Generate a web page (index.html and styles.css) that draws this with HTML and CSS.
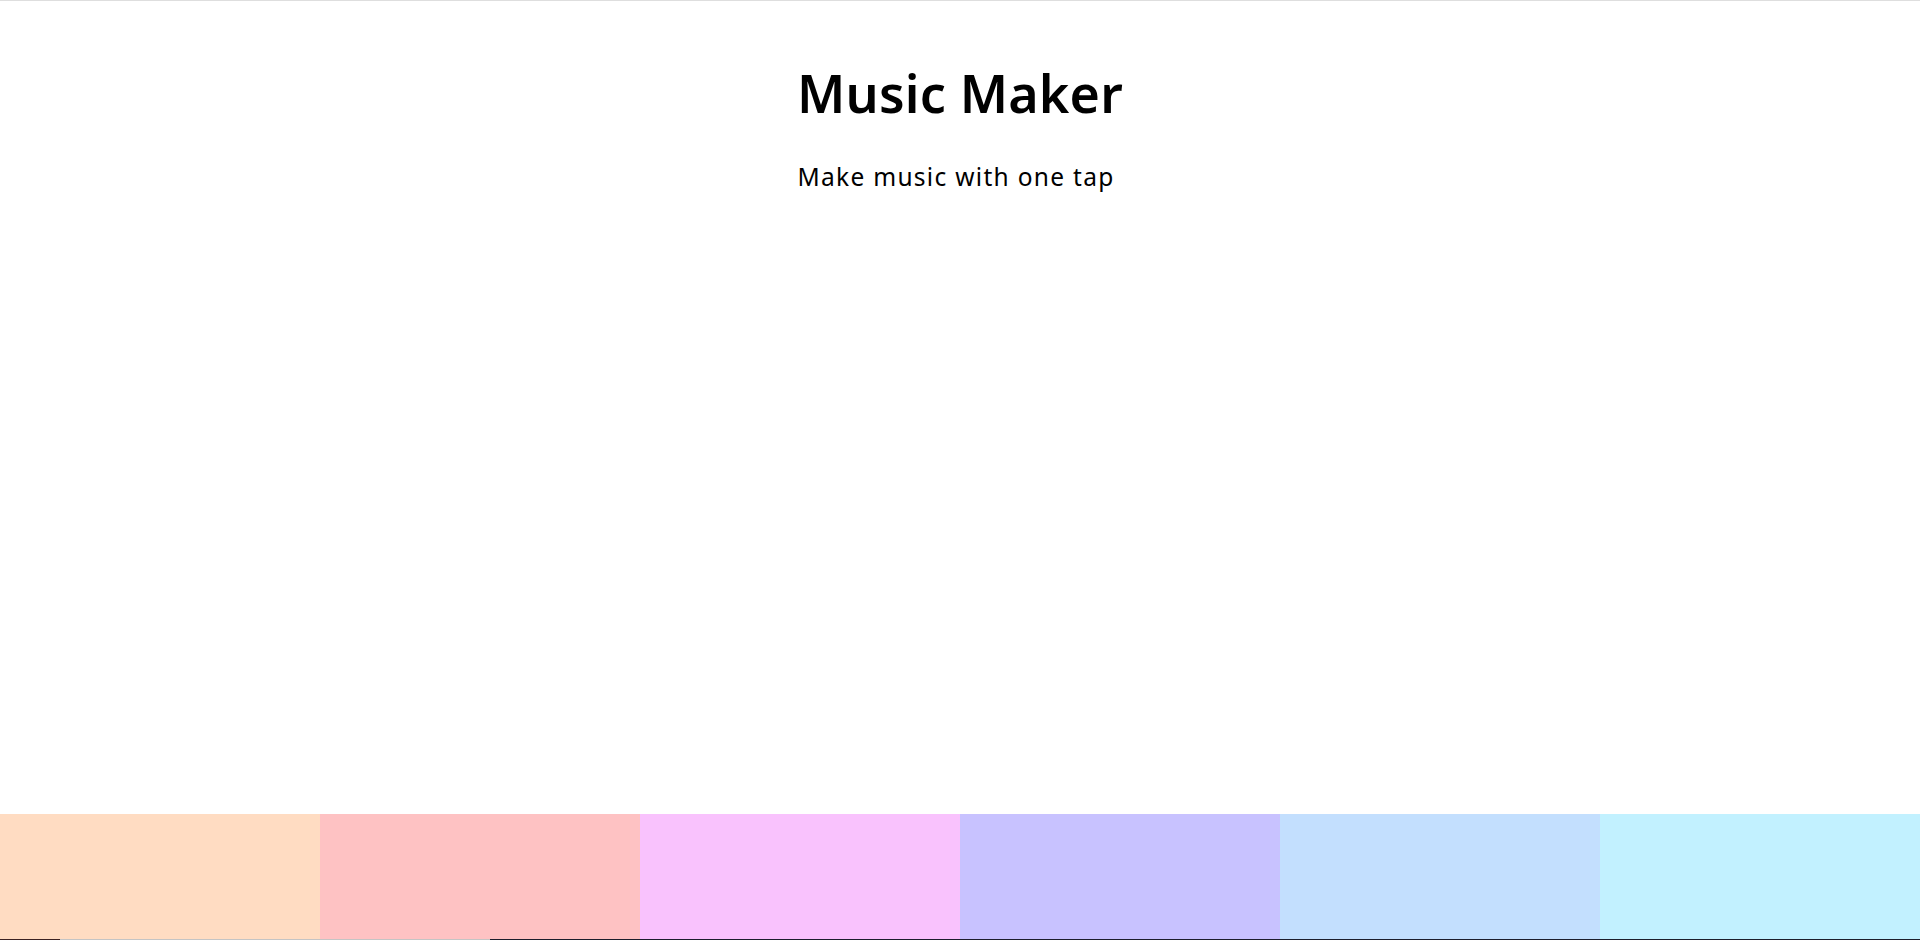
FILE: index.html
```html
<!DOCTYPE html>
<html lang="en">
<head>
<meta charset="utf-8">
<title>Music Maker</title>
<link rel="stylesheet" href="styles.css">
</head>
<body>
<div class="app">
  <header class="header">
    <h1 class="title">Music Maker</h1>
    <p class="subtitle">Make music with one tap</p>
  </header>
  <div class="stage"></div>
  <div class="pads">
    <div class="pad pad-1"></div>
    <div class="pad pad-2"></div>
    <div class="pad pad-3"></div>
    <div class="pad pad-4"></div>
    <div class="pad pad-5"></div>
    <div class="pad pad-6"></div>
  </div>
  <div class="edge">
    <div class="edge-a"></div>
    <div class="edge-b"></div>
    <div class="edge-c"></div>
  </div>
</div>
</body>
</html>
```
FILE: styles.css
```css
* { box-sizing: border-box; }
html, body { margin: 0; padding: 0; }
body {
  background: #fff;
  font-family: "Noto Sans", "Open Sans", sans-serif;
  color: #000;
}
.app {
  height: 940px;
  display: flex;
  flex-direction: column;
  border-top: 1px solid #dedede;
  overflow: hidden;
}
.header {
  display: flex;
  flex-direction: column;
  align-items: center;
  padding-top: 60px;
}
.title {
  margin: 0;
  font-size: 52px;
  font-weight: 600;
  line-height: 64px;
  letter-spacing: 0.2px;
}
.subtitle {
  margin: 36px 0 0;
  padding-right: 8px;
  font-size: 24.5px;
  font-weight: 400;
  line-height: 32px;
  letter-spacing: 1.3px;
}
.stage { flex: 1; }
.pads {
  display: grid;
  grid-template-columns: repeat(6, 1fr);
  height: 125px;
}
.pad-1 { background: #ffdcc2; }
.pad-2 { background: #fec2c3; }
.pad-3 { background: #f9c2fd; }
.pad-4 { background: #c8c2ff; }
.pad-5 { background: #c3dffe; }
.pad-6 { background: #c2f1ff; }
.edge {
  display: flex;
  height: 1px;
}
.edge-a { width: 60px; background: #3a2222; }
.edge-b { width: 430px; background: #c4c4c4; }
.edge-c { flex: 1; background: #1c1e2c; }
```
